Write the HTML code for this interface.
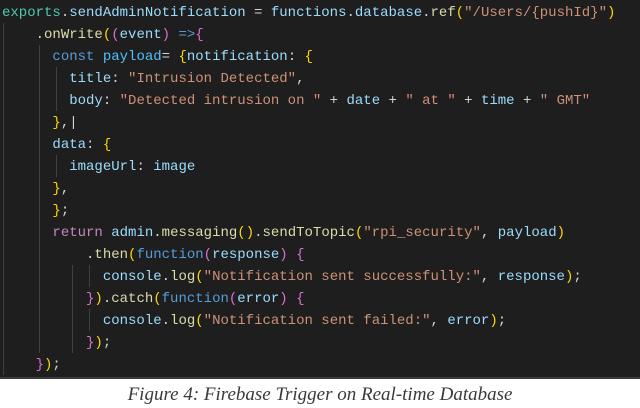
<!DOCTYPE html>
<html><head><meta charset="utf-8"><style>
html,body{margin:0;padding:0;width:640px;height:408px;background:#fff;overflow:hidden}
#code{position:absolute;left:0;top:0;width:640px;height:377px;background:#1e1e1e;border-bottom:2px solid #3a3a3a}
pre{margin:0;position:absolute;left:2px;top:2px;font-family:"Liberation Mono",monospace;font-size:14px;line-height:22px;color:#d4d4d4}
.t{color:#4ec9b0}.v{color:#9cdcfe}.c{color:#4fc1ff}.f{color:#dcdcaa}.k{color:#569cd6}.s{color:#ce9178}.r{color:#c586c0}.b{color:#ffd700}.p{color:#da70d6}
.g{position:absolute;width:1px;background:#404040}
#cap{position:absolute;left:0;top:384px;width:640px;text-align:center;font-family:"Liberation Serif",serif;font-style:italic;font-size:19px;color:#3a3a3a}
</style></head><body>
<div id="code">
<div class="g" style="left:3px;top:23px;height:352px"></div>
<div class="g" style="left:39px;top:45px;height:308px"></div>
<div class="g" style="left:56px;top:67px;height:44px"></div>
<div class="g" style="left:56px;top:155px;height:22px"></div>
<div class="g" style="left:72px;top:265px;height:88px"></div>
<div class="g" style="left:89px;top:265px;height:22px"></div>
<div class="g" style="left:89px;top:309px;height:22px"></div>
<pre><span class="t">exports</span>.<span class="v">sendAdminNotification</span> = <span class="v">functions</span>.<span class="v">database</span>.<span class="f">ref</span><span class="b">(</span><span class="s">"/Users/{pushId}"</span><span class="b">)</span>
    .<span class="f">onWrite</span><span class="b">(</span><span class="p">(</span><span class="v">event</span><span class="p">)</span> <span class="k">=&gt;</span><span class="p">{</span>
      <span class="k">const</span> <span class="c">payload</span>= <span class="b">{</span><span class="v">notification</span>: <span class="b">{</span>
        <span class="v">title</span>: <span class="s">"Intrusion Detected"</span>,
        <span class="v">body</span>: <span class="s">"Detected intrusion on "</span> + <span class="v">date</span> + <span class="s">" at "</span> + <span class="v">time</span> + <span class="s">" GMT"</span>
      <span class="b">}</span>,|
      <span class="v">data</span>: <span class="b">{</span>
        <span class="v">imageUrl</span>: <span class="v">image</span>
      <span class="b">}</span>,
      <span class="b">}</span>;
      <span class="r">return</span> <span class="v">admin</span>.<span class="f">messaging</span><span class="b">()</span>.<span class="f">sendToTopic</span><span class="b">(</span><span class="s">"rpi_security"</span>, <span class="v">payload</span><span class="b">)</span>
          .<span class="f">then</span><span class="b">(</span><span class="k">function</span><span class="p">(</span><span class="v">response</span><span class="p">)</span> <span class="p">{</span>
            <span class="v">console</span>.<span class="f">log</span><span class="b">(</span><span class="s">"Notification sent successfully:"</span>, <span class="v">response</span><span class="b">)</span>;
          <span class="p">}</span><span class="b">)</span>.<span class="f">catch</span><span class="b">(</span><span class="k">function</span><span class="p">(</span><span class="v">error</span><span class="p">)</span> <span class="p">{</span>
            <span class="v">console</span>.<span class="f">log</span><span class="b">(</span><span class="s">"Notification sent failed:"</span>, <span class="v">error</span><span class="b">)</span>;
          <span class="p">}</span><span class="b">)</span>;
    <span class="p">}</span><span class="b">)</span>;</pre>
</div>
<div id="cap">Figure 4: Firebase Trigger on Real-time Database</div>
</body></html>
